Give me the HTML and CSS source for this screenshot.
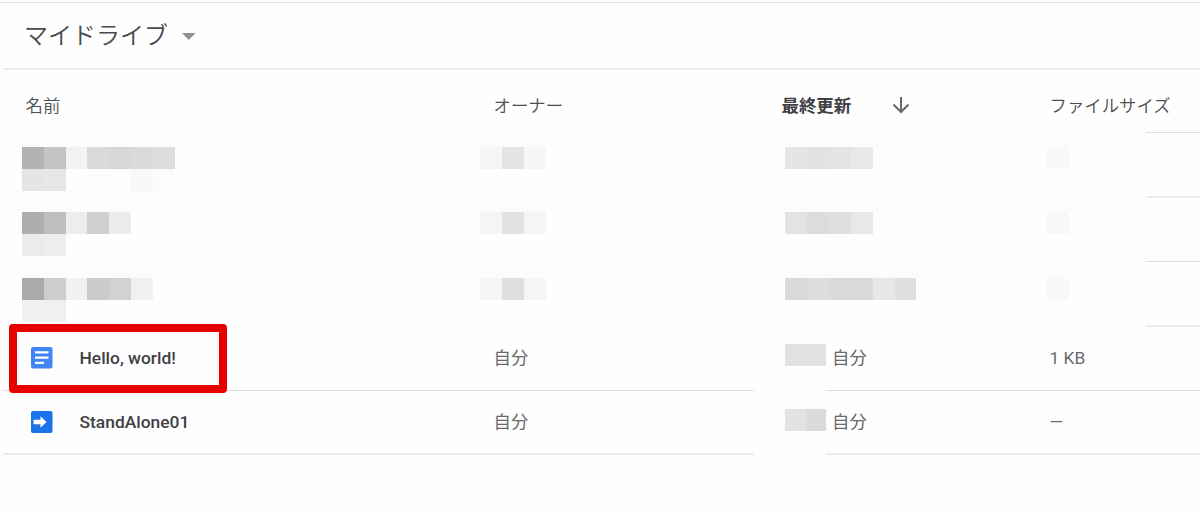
FILE: index.html
```html
<!DOCTYPE html>
<html lang="ja">
<head>
<meta charset="utf-8">
<title>マイドライブ</title>
<link rel="stylesheet" href="styles.css">
</head>
<body>
<main class="drive">
  <header class="toolbar">
    <h1 class="title">マイドライブ</h1>
    <svg class="caret" width="14" height="7" viewBox="0 0 14 7"><path d="M0 0h13.6L6.8 7z" fill="#919497"/></svg>
  </header>
  <section class="list">
    <div class="row head">
      <span>名前</span>
      <span>オーナー</span>
      <span class="sorted">最終更新
        <svg class="arrow" width="18" height="18" viewBox="0 0 18 18" fill="none" stroke="#65696d" stroke-width="2"><path d="M9 1v15M1.5 8.5 9 16l7.500-7.500"/></svg>
      </span>
      <span>ファイルサイズ</span>
    </div>
    <div class="masked">
      <div class="mosaic">
        <svg width="1143" height="199" viewBox="3 127 1143 199" shape-rendering="crispEdges">
          <rect x="3" y="127" width="1143" height="199" fill="#fefefe"/>
          <g fill="#fcfcfc">
            <rect x="3" y="127" width="1143" height="20"/>
            <rect x="3" y="191" width="1143" height="21"/>
            <rect x="3" y="256" width="1143" height="22"/>
            <rect x="3" y="322" width="1143" height="4"/>
          </g>
          <g>
            <rect x="22" y="147" width="22" height="22" fill="#b2b3b5"/>
            <rect x="44" y="147" width="22" height="22" fill="#c3c4c6"/>
            <rect x="66" y="147" width="21" height="22" fill="#f3f3f3"/>
            <rect x="87" y="147" width="22" height="22" fill="#dadada"/>
            <rect x="109" y="147" width="22" height="22" fill="#d7d7d7"/>
            <rect x="131" y="147" width="22" height="22" fill="#dadada"/>
            <rect x="153" y="147" width="22" height="22" fill="#dddddd"/>
            <rect x="22" y="169" width="22" height="22" fill="#e5e5e5"/>
            <rect x="44" y="169" width="22" height="22" fill="#e5e7e9"/>
            <rect x="87" y="169" width="22" height="22" fill="#fdfdfd"/>
            <rect x="131" y="169" width="22" height="22" fill="#f8f8f8"/>
            <rect x="153" y="169" width="22" height="22" fill="#fcfcfc"/>
            <rect x="480" y="147" width="22" height="22" fill="#f6f6f6"/>
            <rect x="502" y="147" width="22" height="22" fill="#e4e4e4"/>
            <rect x="524" y="147" width="22" height="22" fill="#f5f7f6"/>
            <rect x="785" y="147" width="22" height="22" fill="#e5e5e5"/>
            <rect x="807" y="147" width="22" height="22" fill="#e2e2e2"/>
            <rect x="829" y="147" width="22" height="22" fill="#e4e4e4"/>
            <rect x="851" y="147" width="22" height="22" fill="#e9e9e9"/>
            <rect x="1047" y="147" width="22" height="22" fill="#f9f9f9"/>
          </g>
          <g>
            <rect x="22" y="212" width="22" height="22" fill="#adaeb0"/>
            <rect x="44" y="212" width="22" height="22" fill="#bebfc1"/>
            <rect x="66" y="212" width="21" height="22" fill="#efedeb"/>
            <rect x="87" y="212" width="22" height="22" fill="#d0cece"/>
            <rect x="109" y="212" width="22" height="22" fill="#ebebeb"/>
            <rect x="22" y="234" width="22" height="22" fill="#ebebeb"/>
            <rect x="44" y="234" width="22" height="22" fill="#ebeeed"/>
            <rect x="480" y="212" width="22" height="22" fill="#f5f5f5"/>
            <rect x="502" y="212" width="22" height="22" fill="#e2e2e2"/>
            <rect x="524" y="212" width="22" height="22" fill="#f5f5f5"/>
            <rect x="785" y="212" width="22" height="22" fill="#e3e3e3"/>
            <rect x="807" y="212" width="22" height="22" fill="#dcdcdc"/>
            <rect x="829" y="212" width="22" height="22" fill="#e0e0e0"/>
            <rect x="851" y="212" width="22" height="22" fill="#e8e8e8"/>
            <rect x="1047" y="212" width="22" height="22" fill="#f9f9f9"/>
          </g>
          <g>
            <rect x="22" y="278" width="22" height="22" fill="#a9aaac"/>
            <rect x="44" y="278" width="22" height="22" fill="#cccdcf"/>
            <rect x="66" y="278" width="21" height="22" fill="#f3f1ef"/>
            <rect x="87" y="278" width="22" height="22" fill="#cccccc"/>
            <rect x="109" y="278" width="22" height="22" fill="#d2d2d2"/>
            <rect x="131" y="278" width="22" height="22" fill="#f0f0f2"/>
            <rect x="22" y="300" width="22" height="22" fill="#f0f2f1"/>
            <rect x="44" y="300" width="22" height="22" fill="#f0f0f0"/>
            <rect x="480" y="278" width="22" height="22" fill="#f5f5f5"/>
            <rect x="502" y="278" width="22" height="22" fill="#dfdfdf"/>
            <rect x="524" y="278" width="22" height="22" fill="#f4f6f5"/>
            <rect x="785" y="278" width="22" height="22" fill="#dadada"/>
            <rect x="807" y="278" width="22" height="22" fill="#dddddd"/>
            <rect x="829" y="278" width="22" height="22" fill="#dbd9db"/>
            <rect x="851" y="278" width="22" height="22" fill="#dadada"/>
            <rect x="873" y="278" width="22" height="22" fill="#e7e7e7"/>
            <rect x="895" y="278" width="21" height="22" fill="#dfdfdf"/>
            <rect x="1047" y="278" width="22" height="22" fill="#f9f9f9"/>
          </g>
        </svg>
      </div>
      <div class="edges"><i></i><i></i><i></i></div>
    </div>
    <div class="row file">
      <span class="name">
        <svg class="icon" width="22" height="22" viewBox="0 0 22 22"><rect width="21.500" height="21.500" rx="2" fill="#4285f4"/><path d="M4 4.200h13.500v2.300H4zM4 9.500h13.500v2.300H4zM4 14.800h9v2.300H4z" fill="#fff"/></svg>
        Hello, world!
      </span>
      <span>自分</span>
      <span class="updated"><svg class="date" width="41" height="22"><rect width="41" height="22" fill="#e1e1e2"/></svg>自分</span>
      <span>1 KB</span>
      <div class="highlight"></div>
    </div>
    <div class="row file last">
      <span class="name">
        <svg class="icon" width="22" height="22" viewBox="0 0 22 22"><rect width="21.500" height="22" rx="2" fill="#1a73e8"/><path d="M2.500 8.700h7V5.300L15.500 11l-6 5.700v-3.400h-7z" fill="#fff"/></svg>
        StandAlone01
      </span>
      <span>自分</span>
      <span class="updated"><svg class="date" width="41" height="22" shape-rendering="crispEdges"><rect width="22" height="22" fill="#e2e1e3"/><rect x="22" width="19" height="22" fill="#dbdbdd"/></svg>自分</span>
      <span>—</span>
      <div class="cover"></div>
    </div>
  </section>
</main>
</body>
</html>
```
FILE: styles.css
```css
* { box-sizing: border-box; }
body {
  margin: 0;
  background: #fefefe;
  color: #68696c;
  font-family: Roboto, "Noto Sans CJK JP", sans-serif;
  font-size: 17.4px;
}
.drive { height: 518px; overflow: hidden; padding-top: 2px; }
.toolbar {
  display: flex;
  align-items: center;
  height: 66px;
  padding-left: 24px;
  border-top: 1px solid #dfdfdf;
}
.title {
  margin: 0;
  color: #47494d;
  font-size: 24px;
  font-weight: 350;
  line-height: 34px;
}
.caret { margin: 2px 0 0 14px; }
.list { margin-left: 3px; border-top: 2px solid #ebebeb; }
.row {
  display: grid;
  grid-template-columns: 468px 288px 268px 1fr;
  align-items: center;
  height: 64px;
  padding-left: 22.5px;
  line-height: 24px;
  white-space: nowrap;
}
.head { height: 63px; padding-top: 10px; color: #4d4f52; border-bottom: 1px solid #dddde0; font-weight: 350; }
.sorted { display: flex; align-items: center; font-weight: 700; color: #3f4145; }
.arrow { margin: -2px 0 0 41px; }
.masked { display: flex; height: 194px; }
.mosaic { width: 1143px; margin-top: -6px; }
.mosaic svg { display: block; }
.edges { flex: 1; display: grid; grid-template-rows: 65px 64px 65px; }
.edges i { border-bottom: 2px solid #ebebeb; }
.edges i:nth-child(2) { border-bottom: 1px solid #dddde0; }
.file { position: relative; padding-bottom: 1px; border-bottom: 1px solid #dddddf; }
.last { padding-bottom: 0; border-bottom: 2px solid #ebebeb; }
.name { display: flex; align-items: center; color: #404144; font-weight: 500; }
.icon { margin: 0 26.5px 0 5.5px; }
.updated { position: relative; z-index: 1; display: flex; align-items: center; }
.date { margin: -7px 6px 0 3.5px; }
.last .date { margin-top: -5px; }
.highlight {
  position: absolute;
  left: 6px;
  top: -3px;
  width: 218px;
  height: 69px;
  border: 8px solid #e60000;
  border-radius: 4px;
  z-index: 1;
}
.cover {
  position: absolute;
  left: 751px;
  top: -4px;
  width: 72px;
  height: 70px;
  background: linear-gradient(#fcfcfc 22px, #fefefe 22px);
}
```
